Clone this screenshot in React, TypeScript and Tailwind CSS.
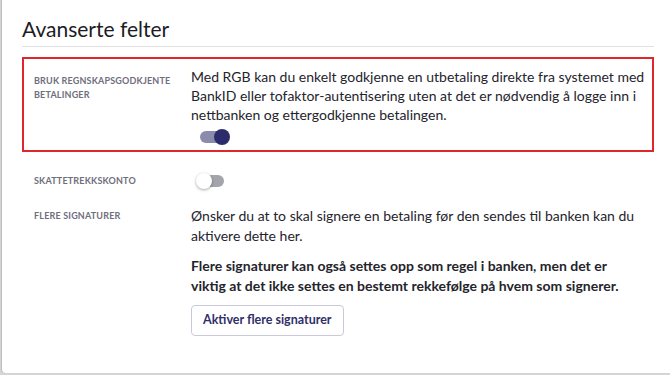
import React, { useState } from 'react';

const Toggle: React.FC<{ on: boolean; onChange: () => void }> = ({ on, onChange }) => (
  <button
    type="button"
    onClick={onChange}
    className="relative flex h-[16px] w-[30px] items-center"
    aria-pressed={on}
  >
    <span className={`h-[12px] w-[26px] rounded-full ${on ? 'bg-[#8b8bab]' : 'bg-[#a4a4ac]'}`} />
    <span
      className={`absolute top-0 h-[16px] w-[16px] rounded-full ${
        on ? 'left-[14px] bg-[#2c2c6c]' : 'left-[-2px] bg-white shadow-[0_1px_3px_rgba(0,0,0,0.35)]'
      }`}
    />
  </button>
);

const Label: React.FC<{ children: React.ReactNode }> = ({ children }) => (
  <div className="w-[157px] shrink-0 text-[9px] font-bold uppercase leading-[14px] tracking-[0.02em] text-[#6e6e7c]">
    {children}
  </div>
);

export default function App() {
  const [rgb, setRgb] = useState(true);
  const [skatt, setSkatt] = useState(false);

  return (
    <div className="h-[375px] w-[670px] overflow-hidden bg-[#d6d6d8] font-['Lato',sans-serif] text-[#24242c]">
      <div className="ml-[2px] h-[373px] rounded-bl-[4px] bg-white pl-[20px] pr-[16px] pt-[15px] shadow-[-1px_0_1px_rgba(0,0,0,0.12)]">
        <h2 className="border-b border-[#e2e2e4] pb-[4px] text-[21px] leading-[27px] text-[#1c1c24]">
          Avanserte felter
        </h2>

        <div className="mt-[10px] flex border-2 border-[#e0262a] pb-[5px] pl-[10px] pt-[8px]">
          <div className="pt-[7px]">
            <Label>
              Bruk regnskapsgodkjente
              <br />
              betalinger
            </Label>
          </div>
          <div className="flex-1">
            <p className="text-[14px] leading-[19px]">
              Med RGB kan du enkelt godkjenne en utbetaling direkte fra systemet med BankID eller
              tofaktor-autentisering uten at det er nødvendig å logge inn i nettbanken og
              ettergodkjenne betalingen.
            </p>
            <div className="mt-[5px] pl-[9px]">
              <Toggle on={rgb} onChange={() => setRgb(!rgb)} />
            </div>
          </div>
        </div>

        <div className="mt-[21px] flex items-center pl-[12px]">
          <Label>Skattetrekkskonto</Label>
          <div className="pl-[7px]">
            <Toggle on={skatt} onChange={() => setSkatt(!skatt)} />
          </div>
        </div>

        <div className="mt-[17px] flex pl-[12px]">
          <div className="pt-[3px]">
            <Label>Flere signaturer</Label>
          </div>
          <div className="flex-1 pr-[12px]">
            <p className="text-[14px] leading-[20px]">
              Ønsker du at to skal signere en betaling før den sendes til banken kan du aktivere
              dette her.
            </p>
            <p className="mt-[10px] text-[14px] font-bold leading-[20px]">
              Flere signaturer kan også settes opp som regel i banken, men det er viktig at det
              ikke settes en bestemt rekkefølge på hvem som signerer.
            </p>
            <button
              type="button"
              className="mt-[9px] h-[31px] rounded-[4px] border border-[#c9c9d9] px-[11px] text-[12.5px] font-bold text-[#303068]"
            >
              Aktiver flere signaturer
            </button>
          </div>
        </div>
      </div>
    </div>
  );
}
